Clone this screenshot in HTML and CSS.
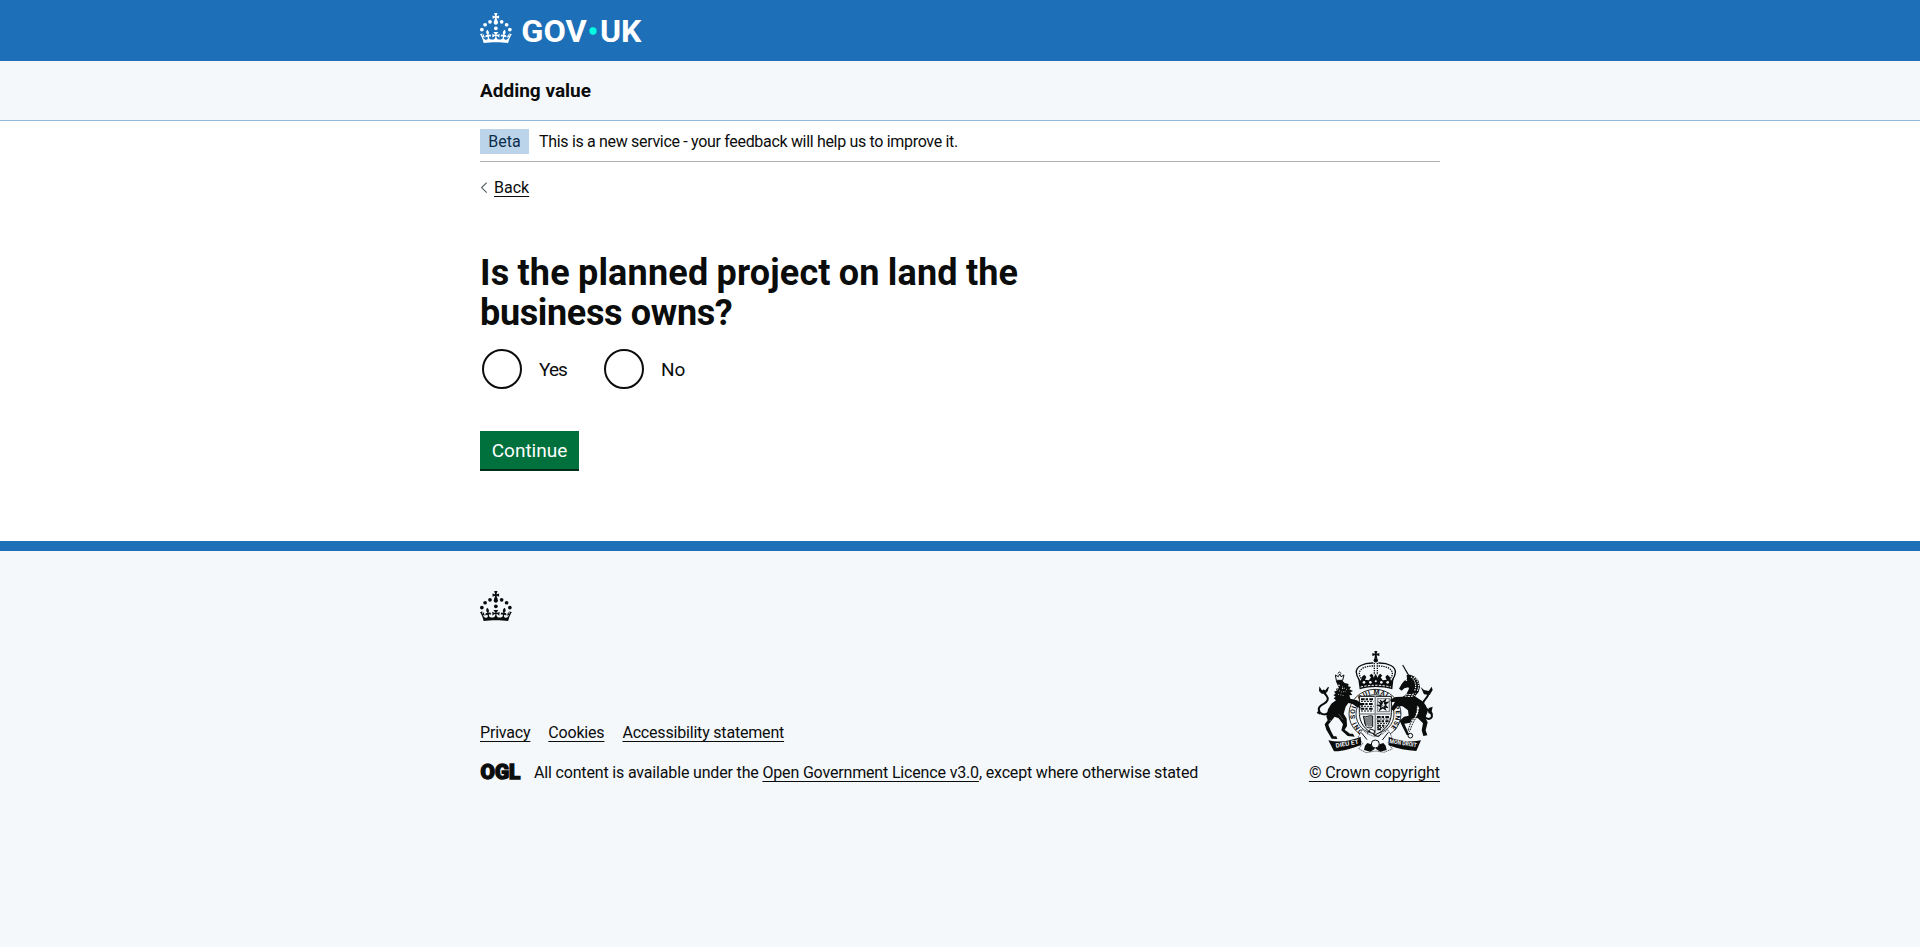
FILE: index.html
```html
<!DOCTYPE html>
<html lang="en">
<head>
<meta charset="utf-8">
<title>Is the planned project on land the business owns?</title>
<link rel="stylesheet" href="styles.css">
</head>
<body>
<svg width="0" height="0" class="defs" aria-hidden="true">
  <symbol id="crown" viewBox="0 0 64 60">
    <circle cx="20" cy="17.6" r="3.7"/><circle cx="10.2" cy="23.5" r="3.7"/><circle cx="3.7" cy="33.2" r="3.7"/><circle cx="31.7" cy="30.6" r="3.7"/><circle cx="43.3" cy="17.6" r="3.7"/><circle cx="53.2" cy="23.5" r="3.7"/><circle cx="59.7" cy="33.2" r="3.7"/>
    <path d="M33.1,9.8c.2-.1.3-.3.5-.5l4.6,2.4v-6.8l-4.6,1.5c-.1-.2-.3-.3-.5-.5l1.9-5.9h-6.7l1.9,5.9c-.2.1-.3.3-.5.5l-4.6-1.5v6.8l4.6-2.4c.1.2.3.3.5.5l-2.6,8c-.9,2.8,1.2,5.7,4.1,5.7h0c3,0,5.1-2.9,4.1-5.7l-2.6-8ZM37,37.9s-3.4,3.8-4.1,6.1c2.2,0,4.2-.5,6.4-2.8l-.7,8.5c-2-2.8-4.4-4.1-5.7-3.8.1,3.1.5,6.7,5.8,7.2,3.7.3,6.7-1.5,7-3.8.4-2.6-2-4.3-3.7-1.6-1.4-4.5,2.4-6.1,4.9-3.2-1.9-4.5-1.8-7.7,2.4-10.9,3,4,2.6,7.3-1.2,11.1,2.4-1.3,6.2,0,4,4.6-1.2-2.8-3.7-2.2-4.2.2-.3,1.7.7,3.7,3,4.2,1.9.3,4.7-.9,7-5.9-1.3,0-2.4.7-3.9,1.7l2.4-8c.6,2.3,1.4,3.7,2.2,4.5.6-1.6.5-2.8,0-5.3l5,1.8c-2.6,3.6-5.2,8.7-7.3,17.5-7.4-1.1-15.7-1.7-24.5-1.7h0c-8.8,0-17.1.6-24.5,1.7-2.1-8.9-4.7-13.9-7.3-17.5l5-1.8c-.5,2.5-.6,3.7,0,5.3.8-.8,1.6-2.3,2.2-4.5l2.4,8c-1.5-1-2.6-1.7-3.9-1.7,2.3,5,5.2,6.2,7,5.9,2.3-.4,3.3-2.4,3-4.2-.5-2.4-3-3.1-4.2-.2-2.2-4.6,1.6-6,4-4.6-3.7-3.7-4.2-7.1-1.2-11.1,4.2,3.2,4.3,6.4,2.4,10.9,2.5-2.8,6.3-1.3,4.9,3.2-1.8-2.7-4.1-1-3.7,1.6.3,2.3,3.3,4.1,7,3.8,5.4-.5,5.7-4.2,5.8-7.2-1.3-.2-3.7,1-5.7,3.8l-.7-8.5c2.2,2.3,4.2,2.7,6.4,2.8-.7-2.3-4.1-6.1-4.1-6.1h10.6Z"/>
  </symbol>
</svg>
<header class="header">
  <div class="container">
    <svg class="logo" width="162" height="30" viewBox="0 0 324 60" role="img" aria-label="GOV.UK">
      <use href="#crown" width="64" height="60"/>
      <text class="wordmark" x="82.5" y="58" textLength="131" lengthAdjust="spacingAndGlyphs">GOV</text>
      <circle class="dot" cx="226" cy="36" r="7.3"/>
      <text class="wordmark" x="240" y="58" textLength="83" lengthAdjust="spacingAndGlyphs">UK</text>
    </svg>
  </div>
</header>
<div class="service"><div class="container"><span class="service-name">Adding value</span></div></div>
<div class="container">
  <div class="phase"><strong class="tag">Beta</strong><span class="phase-text">This is a new service - your feedback will help us to improve it.</span></div>
  <a class="back"><svg width="8" height="12" viewBox="0 0 8 12"><path d="M6.7 .6 1.6 5.6l5.1 5" fill="none" stroke="#505a5f" stroke-width="1.1"/></svg><span class="link back-text">Back</span></a>
  <main>
    <h1><span class="line1">Is the planned project on land the</span><br><span class="line2">business owns?</span></h1>
    <div class="radios">
      <label class="radio"><span class="ring"></span><span class="option yes">Yes</span></label>
      <label class="radio"><span class="ring"></span><span class="option">No</span></label>
    </div>
    <button class="button">Continue</button>
  </main>
</div>
<footer class="footer">
  <div class="container">
    <svg class="footer-crown" width="32" height="30"><use href="#crown" width="32" height="30"/></svg>
    <div class="meta">
      <div>
        <div class="links"><a class="link">Privacy</a><a class="link">Cookies</a><a class="link">Accessibility statement</a></div>
        <div class="licence">
          <svg class="ogl" width="41" height="17" viewBox="0 0 41 17"><text x="0.600" y="15.600" textLength="39.800" lengthAdjust="spacingAndGlyphs">OGL</text></svg>
          <span class="lic-text">All content is available under the <a class="link">Open Government Licence v3.0</a>, except where otherwise stated</span>
        </div>
      </div>
      <div class="copyright">
        <svg class="arms" width="116" height="102" viewBox="51 33 348 306" aria-hidden="true">
          <!-- crown -->
          <path d="M223 33h9l-2 8 8-2v9l-8-2 2 10h-9l2-10-8 2v-9l8 2Z"/>
          <circle cx="227.500" cy="61" r="6.500"/>
          <path class="ln" stroke-width="4" d="M220 69C190 68 167 80 169 98c1 9 4 15 8 21M235 69C265 68 288 80 286 98c-1 9-4 15-8 21"/>
          <path class="ln" stroke-width="4" stroke-dasharray="4 3" d="M219 78c-22 0-41 8-41 22 0 7 3 12 7 17M236 78c22 0 41 8 41 22 0 7-3 12-7 17M223 69v36M232 69v36"/>
          <path d="M174 112l8 10 4-12 7-6 6 7-4 8 12 2 6-9-5-5 6-6 5 4 2 8 6-12 6 12 3-8 5-4 6 6-5 5 6 9 12-2-4-8 6-7 7 6 4 12 8-10-4 36c-34-9-64-9-98 0Z"/>
          <path class="pl" stroke-width="3" stroke-dasharray="7 4" d="M182 141c30-7 61-7 91 0"/>
          <g class="bg"><circle cx="192" cy="127" r="4"/><circle cx="211" cy="127" r="4"/><circle cx="227.500" cy="124" r="3"/><circle cx="244" cy="127" r="4"/><circle cx="263" cy="127" r="4"/></g>
          <!-- garter and shield -->
          <ellipse class="paper" cx="225" cy="222" rx="78" ry="74" stroke-width="2.500"/>
          <ellipse class="paper" cx="225" cy="222" rx="57" ry="58" stroke-width="2.500"/>
          <path id="garter" fill="none" d="M206 281A61 61 0 1 1 246 281"/>
          <text class="motto"><textPath href="#garter" textLength="310">HONI SOIT QUI MAL Y PENSE</textPath></text>
          <path class="paper" stroke-width="3" d="M178 169h96v49c0 31-17 53-48 66-31-13-48-35-48-66Z"/>
          <path class="ln grey" stroke-width="5" d="M226 168v112M178 222h94"/>
          <path class="ln" stroke-width="6" stroke-dasharray="11 3 7 4" d="M183 178h38M182 192h38M182 206h38M231 231h38M231 244h35M232 257h27M232 268h15"/>
          <path class="ln" stroke-width="3" stroke-dasharray="6 3" d="M183 184h37M183 199h38M183 213h37M230 237h39M231 250h30M231 263h22"/>
          <path class="ln grey" stroke-width="4" d="M233 176h35v39h-35Z"/>
          <path class="ln" stroke-width="4" d="M240 181l7 6 9-7-2 9 9-2-8 8 8 8-10-3 3 8-8-5-8 6 3-9-8-4 10-1-6-7 9 3"/>
          <path class="ln" stroke-width="3" d="M190 229c9 5 18-5 28-1v32c-7 6-16 4-21-2ZM195 232v20M201 232v25M207 230v30M213 229v30"/>
          <!-- lion -->
          <path class="ln" stroke-width="3" d="M106 105l3 16h19l4-16-9 5-4-8-4 8ZM113 101l5-5 6 5"/>
          <path d="M107 122l18-2 9 9 12 3-2 7 9 2-5 7 11 5-8 4 6 8-9 1 3 10 20 5 11 8 10 1-4 7-12-1 8 8-14-3-12-9-13-3-8 11-6 21 9 15 1 22-7 11 16 12 9 0 5 9-21-2-19-17 5-18-13-18-12-5-12 15-7 9 8 20 8 15 8 0 3 8-17-1-16-27-5-16 9-12-4-12 5-21 10-17 14-10-7-6 6-5-7-5 7-4-5-6 8-3-2-6 9-1Z"/>
          <path class="ln" stroke-width="6" d="M89 216c-11 10-23 9-30 0-8-12 3-20 13-25 10-6 16-14 7-25-5-5-9-8-7-17"/>
          <path d="M58 139l7 11 10 2 8-10 4-1-4 13-7 7-11 0-8-8ZM57 209l-7 10 12 6Z"/>
          <g class="bg"><circle cx="117" cy="136" r="2.500"/><circle cx="128" cy="145" r="2"/></g>
          <path class="pl" stroke-width="2" stroke-dasharray="3 4" d="M111 148l13 8 14-2M114 163l20 4M126 140l15 9M90 241l11 11M118 224l12 17"/>
          <!-- unicorn -->
          <path class="ln" stroke-width="3.500" d="M308 75l18 31"/>
          <path d="M320 105l11-1 14 6 11 13 4 18-4 15-11 13 12 8 11 7 10 13 5 18-7 18 7 14-6 24 5 15-12 2-5-17 4-21-16-16-17 2-5 12-18 3 15 34-8 0-14-28-7-15 13-12 14-3-2-16-16-12-15-1-12 15-8-6 12-22-11 2-4-8 17-8 21-1 11-8 8-16-2-4-12 3-8 7-8-6 8-14 8-10 8-4Z"/>
          <path class="pl" stroke-width="3.500" stroke-dasharray="4 3" d="M333 110c14 11 17 28 11 42M342 111c14 13 17 27 10 42"/>
          <path class="pl" stroke-width="3" stroke-dasharray="7 3" d="M307 157c12 8 26 9 40 3M304 163c13 8 28 8 41 3"/>
          <circle class="bg" cx="319" cy="121" r="2.500"/>
          <path class="ln" stroke-width="6" d="M371 229c16 15 31 5 22-10-6-9-18-12-23-24-5-13 12-18 15-32"/>
          <path d="M362 141l10 9 14 3 9-13 3 10-9 15-17-2ZM386 204l12-4-3 14 4 9-14-3Z"/>
          <path class="paper" stroke-width="3" stroke-dasharray="5 3" d="M351 194l7 9-3 17-11 20-9 17-6 17-5-3 7-20 14-22 5-17Z"/>
          <circle class="ln" cx="331" cy="287" r="7" stroke-width="3"/>
          <!-- ribbon -->
          <path class="paper" stroke-width="2" stroke-dasharray="4 2" d="M175 290l12-21 16 13 21 8 23-8 16-13 13 22-12 18 13 18-25 10-25-4-29 5-22-12 12-15Z"/>
          <path d="M202 309l18 6 4 12-13 8-19-5 3-13ZM250 309l-18 6-4 12 13 8 19-5-3-13Z"/>
          <circle class="paper" cx="226" cy="312" r="12" stroke-width="3"/>
          <path class="ln" stroke-width="3" d="M202 278l10-11 12 5-3 13 15 5 8-10M184 278l17 21M265 277l-18 23"/>
          <path d="M85 301c33 8 65 2 97-10l2 24c-32 11-57 20-82 19ZM266 291c34 13 69 17 97 10l-14 32c-29-2-57-6-83-17Z"/>
          <text class="scroll" transform="translate(108 323) rotate(-10)" textLength="70" lengthAdjust="spacingAndGlyphs">DIEU ET</text>
          <text class="scroll" transform="translate(268 309) rotate(9)" textLength="82" lengthAdjust="spacingAndGlyphs">MON DROIT</text>
        </svg>
        <a class="link copy-text">© Crown copyright</a>
      </div>
    </div>
  </div>
</footer>
</body>
</html>
```
FILE: styles.css
```css
* { box-sizing: border-box; }
body { margin: 0; min-height: 947px; display: flex; flex-direction: column; font: 16px/20px Roboto, sans-serif; color: #0b0c0c; background: #fff; }
.defs { position: absolute; }
.container { width: 960px; margin: 0 auto; }
.header { height: 61px; padding-top: 13px; background: #1d70b8; color: #fff; }
.logo { display: block; fill: #fff; overflow: visible; }
.wordmark { font: 700 62px Roboto, sans-serif; }
.dot { fill: #00ffe0; }
.service { height: 60px; padding-top: 17px; background: #f4f8fb; border-bottom: 1px solid #8eb8dc; }
.service-name { font-size: 19px; line-height: 25px; font-weight: 700; }
.phase { height: 41px; display: flex; align-items: center; border-bottom: 1px solid #b1b4b6; }
.phase-text { padding-top: 2px; letter-spacing: -0.32px; }
.tag { width: 49px; height: 25px; margin-right: 10px; background: #bbd4ea; color: #0c2d4a; font-weight: 400; line-height: 25px; text-align: center; }
.back { display: flex; align-items: center; gap: 6px; height: 20px; margin-top: 16px; }
.link { text-decoration: underline; text-decoration-thickness: 1px; text-underline-offset: 3px; }
main { padding-top: 55px; height: 343px; }
h1 { margin: 0; font-size: 36px; line-height: 40px; font-weight: 700; }
.line1 { word-spacing: -1px; letter-spacing: 0.18px; }
.line2 { letter-spacing: -0.35px; }
.radios { display: flex; margin-top: 16px; padding-left: 2px; }
.radio { display: flex; align-items: center; width: 122px; font-size: 19px; }
.ring { width: 40px; height: 40px; margin-right: 17px; border: 2px solid #0b0c0c; border-radius: 50%; }
.option { padding-top: 2px; }
.yes { letter-spacing: -0.9px; }
.button { display: block; width: 99px; height: 38px; margin-top: 42px; padding: 2px 0 0; border: 0; background: #00703c; color: #fff; box-shadow: 0 2px 0 #002d18; font: 19px/36px Roboto, sans-serif; }
.footer { flex: 1; border-top: 10px solid #1d70b8; background: #f4f8fb; padding-top: 40px; }
.footer-crown { display: block; fill: #0b0c0c; }
.meta { display: flex; justify-content: space-between; align-items: flex-end; height: 162px; }
.links { display: flex; gap: 18px; margin-bottom: 20px; letter-spacing: -0.19px; }
.licence { display: flex; align-items: center; gap: 13px; }
.ogl { margin-bottom: 3px; overflow: visible; }
.ogl text { font: 900 20px Roboto, sans-serif; fill: #0b0c0c; stroke: #0b0c0c; stroke-width: 1.3px; }
.lic-text { letter-spacing: -0.165px; }
.copyright { display: flex; flex-direction: column; align-items: center; gap: 10px; }
.copy-text { letter-spacing: -0.08px; }
.arms { display: block; margin-left: 1px; fill: #0b0c0c; overflow: visible; }
.arms .ln { fill: none; stroke: #0b0c0c; }
.arms .grey { stroke: #8b8e90; }
.arms .pl { fill: none; stroke: #f4f8fb; }
.arms .bg { fill: #f4f8fb; }
.arms .paper { fill: #f4f8fb; stroke: #0b0c0c; }
.motto { font: 700 20px Roboto, sans-serif; }
.scroll { font: 700 18px Roboto, sans-serif; fill: #f4f8fb; }
```
